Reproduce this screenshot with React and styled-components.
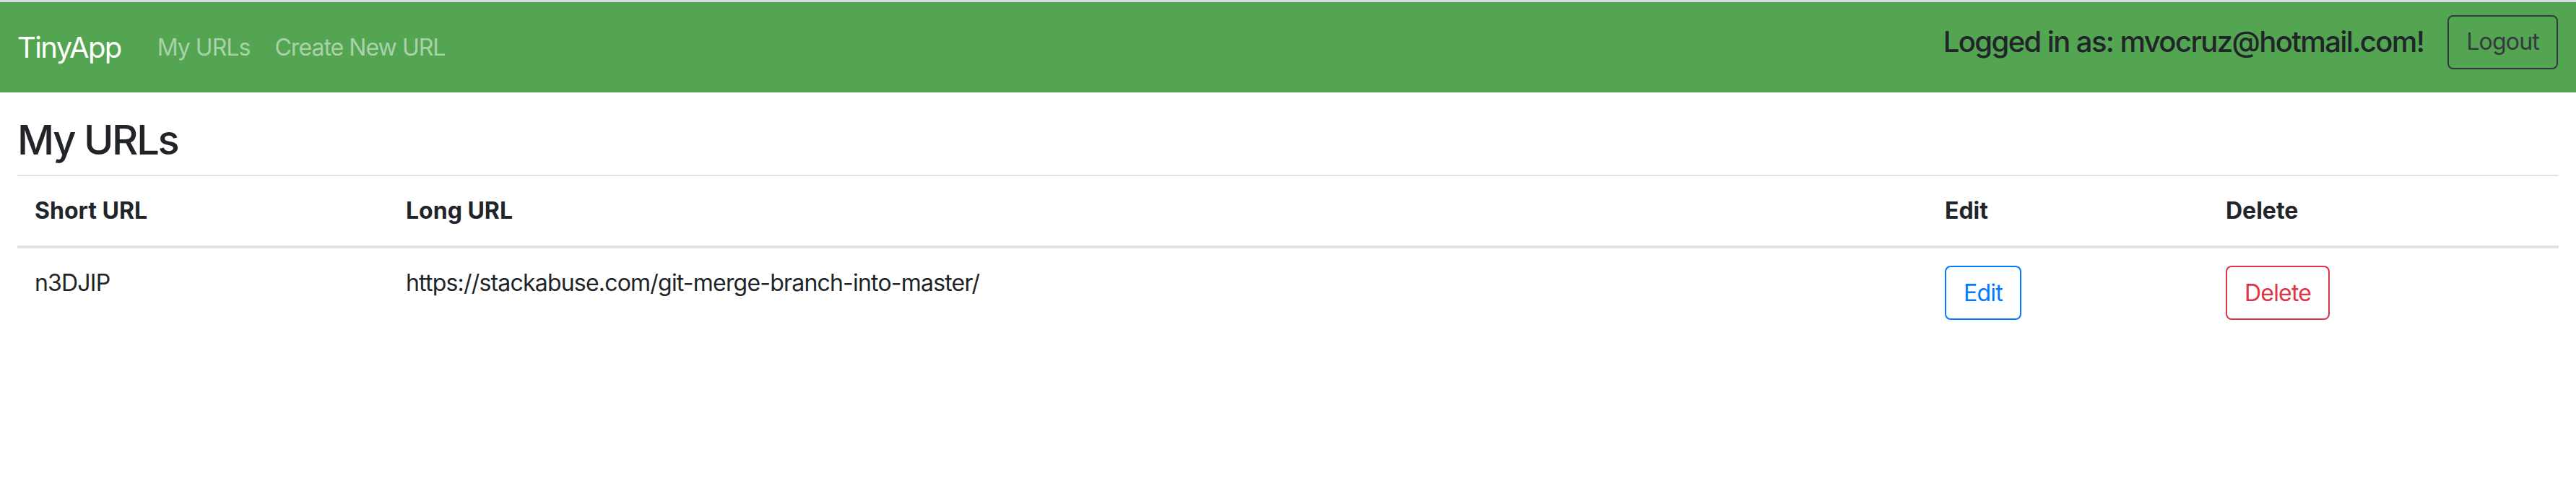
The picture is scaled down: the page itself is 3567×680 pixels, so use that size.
import React from "react";
import styled, { createGlobalStyle } from "styled-components";

const GlobalStyle = createGlobalStyle`
  body {
    margin: 0;
    background: #fff;
    color: #212529;
    font-family: Inter, "Noto Sans", "Liberation Sans", sans-serif;
  }
`;

const Navbar = styled.nav`
  display: flex;
  align-items: center;
  height: 125px;
  padding: 0 25px 0 24px;
  background-color: #53a551;
  border-top: 3px solid #d8dbde;
`;

const Brand = styled.a`
  font-size: 40px;
  line-height: 60px;
  letter-spacing: -0.04em;
  color: #fff;
  margin-right: 33px;
  text-decoration: none;
`;

const NavLink = styled.a`
  font-size: 32px;
  line-height: 48px;
  letter-spacing: -0.03em;
  padding: 0 17px;
  color: rgba(255, 255, 255, 0.5);
  text-decoration: none;
`;

const UserArea = styled.div`
  margin-left: auto;
  display: flex;
  align-items: center;
  gap: 33px;
  padding-bottom: 15px;
`;

const Greeting = styled.h5`
  margin: 0;
  font-size: 40px;
  font-weight: 500;
  line-height: 1.2;
  letter-spacing: -0.04em;
  color: #212529;
`;

const OutlineButton = styled.button`
  height: 75px;
  padding: 0 24px;
  font-family: inherit;
  font-size: 32px;
  line-height: 48px;
  letter-spacing: -0.025em;
  background: transparent;
  color: ${(p) => p.$color};
  border: 2px solid ${(p) => p.$color};
  border-radius: 8px;
  cursor: pointer;
`;

const Main = styled.main`
  padding: 33px 24px 0;
`;

const Title = styled.h3`
  margin: 0 0 14px;
  font-size: 56px;
  font-weight: 500;
  line-height: 1.2;
  letter-spacing: -0.04em;
`;

const Table = styled.table`
  width: 100%;
  table-layout: fixed;
  border-collapse: collapse;
  font-size: 32px;
  line-height: 48px;
`;

const HeadCell = styled.th`
  box-sizing: border-box;
  width: ${(p) => p.$width}px;
  text-align: left;
  font-weight: 700;
  padding: 24px;
  border-top: 2px solid #dee2e6;
  border-bottom: 4px solid #dee2e6;
`;

const Cell = styled.td`
  padding: 24px;
  vertical-align: top;
  letter-spacing: -0.025em;
`;

const urls = [
  {
    id: "n3DJIP",
    longURL: "https://stackabuse.com/git-merge-branch-into-master/"
  }
];

export default function App() {
  return (
    <>
      <GlobalStyle />
      <Navbar>
        <Brand href="#">TinyApp</Brand>
        <NavLink href="#">My URLs</NavLink>
        <NavLink href="#">Create New URL</NavLink>
        <UserArea>
          <Greeting>Logged in as: mvocruz@hotmail.com!</Greeting>
          <OutlineButton $color="#343a40">Logout</OutlineButton>
        </UserArea>
      </Navbar>
      <Main>
        <Title>My URLs</Title>
        <Table>
          <thead>
            <tr>
              <HeadCell $width={514}>Short URL</HeadCell>
              <HeadCell $width={2131}>Long URL</HeadCell>
              <HeadCell $width={389}>Edit</HeadCell>
              <HeadCell $width={485}>Delete</HeadCell>
            </tr>
          </thead>
          <tbody>
            {urls.map((url) => (
              <tr key={url.id}>
                <Cell>{url.id}</Cell>
                <Cell>{url.longURL}</Cell>
                <Cell>
                  <OutlineButton $color="#007bff">Edit</OutlineButton>
                </Cell>
                <Cell>
                  <OutlineButton $color="#dc3545">Delete</OutlineButton>
                </Cell>
              </tr>
            ))}
          </tbody>
        </Table>
      </Main>
    </>
  );
}
